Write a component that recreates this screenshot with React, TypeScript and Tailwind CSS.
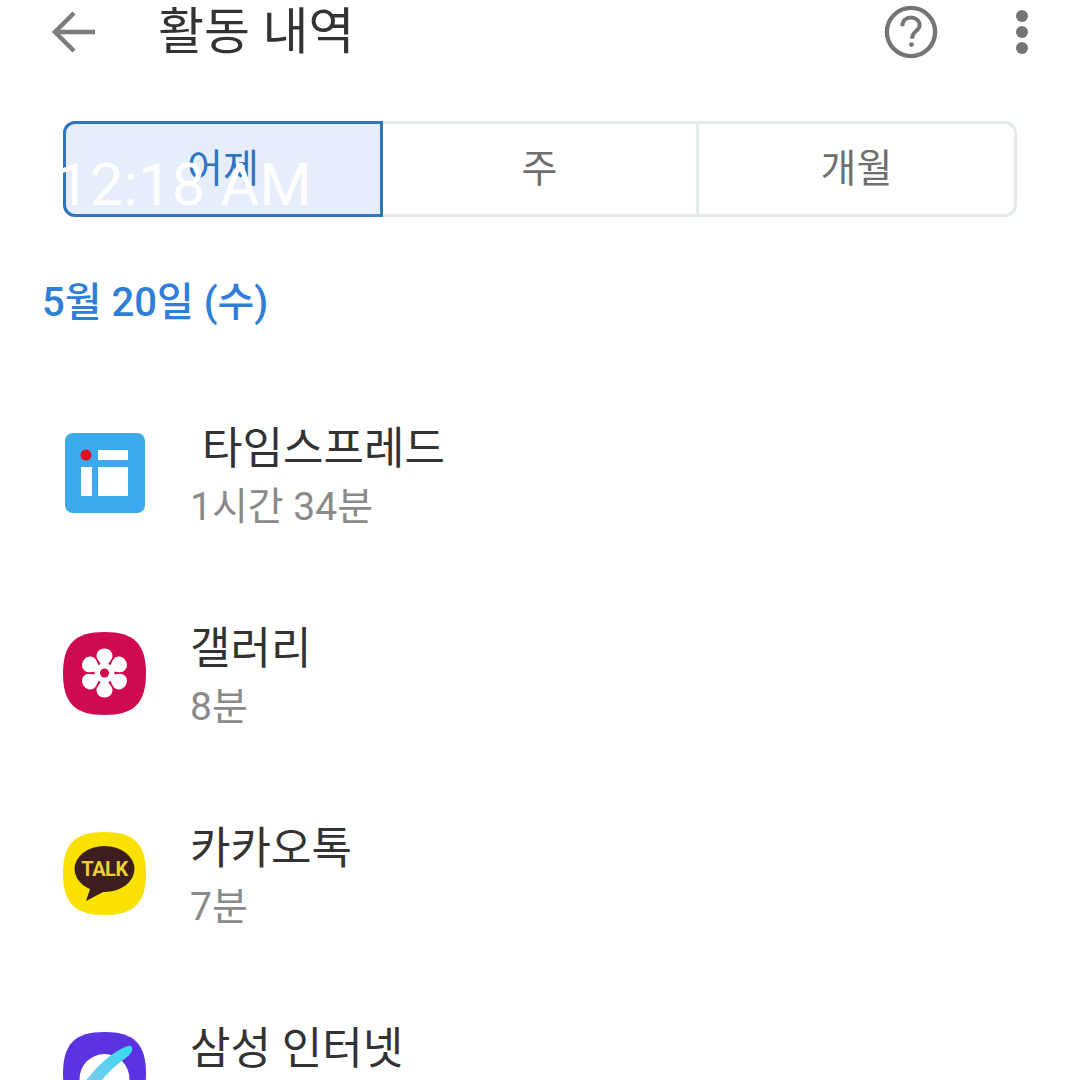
import React from "react";

const font = { fontFamily: '"Roboto", "Noto Sans CJK KR", sans-serif' };

const squircle = "M41.500 0C71 0 83 12 83 41.500C83 71 71 83 41.500 83C12 83 0 71 0 41.500C0 12 12 0 41.500 0Z";

const TimeSpreadIcon = () => (
  <svg width="83" height="83" viewBox="0 0 83 83">
    <rect x="2" y="1" width="80" height="80" rx="8" fill="#3ba9ec" />
    <rect x="35" y="18" width="30" height="10" fill="#fff" />
    <rect x="35" y="35" width="30" height="29" fill="#fff" />
    <rect x="18" y="35" width="11" height="29" fill="#fff" />
    <circle cx="23" cy="23" r="5.500" fill="#e01020" />
  </svg>
);

const GalleryIcon = () => (
  <svg width="83" height="83" viewBox="0 0 83 83">
    <path d={squircle} fill="#cf0a50" />
    {[0, 60, 120, 180, 240, 300].map((a) => (
      <path
        key={a}
        d="M41.500 38C39 32 33.500 28 33.500 24C33.500 19.500 37 16.500 41.500 16.500C46 16.500 49.500 19.500 49.500 24C49.500 28 44 32 41.500 38Z"
        fill="#fff"
        transform={`rotate(${a} 41.500 41)`}
      />
    ))}
    <circle cx="41.500" cy="41" r="10" fill="#fff" />
    <circle cx="41.500" cy="41" r="4.500" fill="#cf0a50" />
  </svg>
);

const KakaoIcon = () => (
  <svg width="83" height="83" viewBox="0 0 83 83">
    <path d={squircle} fill="#fae100" />
    <ellipse cx="41.500" cy="37" rx="30" ry="23" fill="#3c1e1e" />
    <path d="M28 54L23 69L44 58Z" fill="#3c1e1e" />
    <text x="41.500" y="44" textAnchor="middle" fontSize="20" fontWeight="700" fill="#f0d030" fontFamily="Roboto, sans-serif" letterSpacing="-0.500">
      TALK
    </text>
  </svg>
);

const InternetIcon = () => (
  <svg width="83" height="83" viewBox="0 0 83 83">
    <defs>
      <linearGradient id="ring" x1="20" y1="62" x2="68" y2="15" gradientUnits="userSpaceOnUse">
        <stop offset="0" stopColor="#8cc4ee" />
        <stop offset="1" stopColor="#35dcf0" />
      </linearGradient>
    </defs>
    <path d={squircle} fill="#5b33e0" />
    <circle cx="41.500" cy="47" r="25" fill="#fff" />
    <path d="M68 14C72 18 66 24 60 28C50 35 38 48 28 62L18 56C28 40 44 24 58 17C62 15 66 13 68 14Z" fill="url(#ring)" />
  </svg>
);

const apps = [
  { name: "타임스프레드", time: "1시간 34분", icon: <TimeSpreadIcon />, indent: true },
  { name: "갤러리", time: "8분", icon: <GalleryIcon /> },
  { name: "카카오톡", time: "7분", icon: <KakaoIcon /> },
  { name: "삼성 인터넷", time: "6분", icon: <InternetIcon /> },
];

export default function App() {
  return (
    <div className="relative h-[1080px] w-[1080px] overflow-hidden bg-white" style={font}>
      {/* Header */}
      <div className="flex h-[64px] items-center pl-[50px] pr-[52px]">
        <svg width="48" height="44" viewBox="0 0 48 44" fill="none" stroke="#7c7c7c" strokeWidth="4.500">
          <path d="M45 22H5M24 3L5 22L24 41" />
        </svg>
        <div className="ml-[60px] flex-1 text-[50px] leading-none text-[#333333]">활동 내역</div>
        <svg width="54" height="54" viewBox="0 0 56 56" fill="none" stroke="#757575" strokeWidth="4.500">
          <circle cx="28" cy="28" r="25" />
          <path d="M19 22C19 16 23 13 28 13C33 13 37 16.500 37 21C37 27 29 27 29 35" strokeWidth="4" />
          <circle cx="28.500" cy="41" r="2.500" fill="#757575" stroke="none" />
        </svg>
        <div className="ml-[78px] flex flex-col gap-[4px]">
          <span className="h-[12px] w-[12px] rounded-full bg-[#757575]" />
          <span className="h-[12px] w-[12px] rounded-full bg-[#757575]" />
          <span className="h-[12px] w-[12px] rounded-full bg-[#757575]" />
        </div>
      </div>

      {/* Period tabs */}
      <div className="ml-[63px] mt-[57px] flex h-[96px] w-[954px] rounded-[12px] border-[3px] border-[#e4e9eb] text-[39px]">
        <div className="-my-[3px] -ml-[3px] flex w-[320px] items-center justify-center rounded-l-[12px] border-[3px] border-[#2f74c0] bg-[#e5eefa] text-[#2f74c0]">
          어제
        </div>
        <div className="flex w-[316px] items-center justify-center border-r-[3px] border-[#e4e9eb] text-[#6f6f6f]">주</div>
        <div className="flex flex-1 items-center justify-center text-[#6f6f6f]">개월</div>
      </div>

      {/* Date */}
      <div className="ml-[42px] mt-[63px] text-[40px] font-medium leading-[46px] text-[#2f7ed8]">5월 20일 (수)</div>

      {/* App usage list */}
      <div className="mt-[47px]">
        {apps.map((app) => (
          <div key={app.name} className="flex h-[200px] items-center pl-[63px]">
            {app.icon}
            <div className="ml-[44px] flex flex-col pt-[8px]">
              <div className={`text-[44px] leading-[52px] text-[#333333] ${app.indent ? "pl-[12px]" : ""}`}>{app.name}</div>
              <div className="mt-[8px] text-[39px] leading-[48px] text-[#8a8a8a]">{app.time}</div>
            </div>
          </div>
        ))}
      </div>

      {/* Clock stamped over the screenshot */}
      <div className="absolute left-[56px] top-[150px] text-[60px] leading-[70px] text-white">12:18 AM</div>
    </div>
  );
}
